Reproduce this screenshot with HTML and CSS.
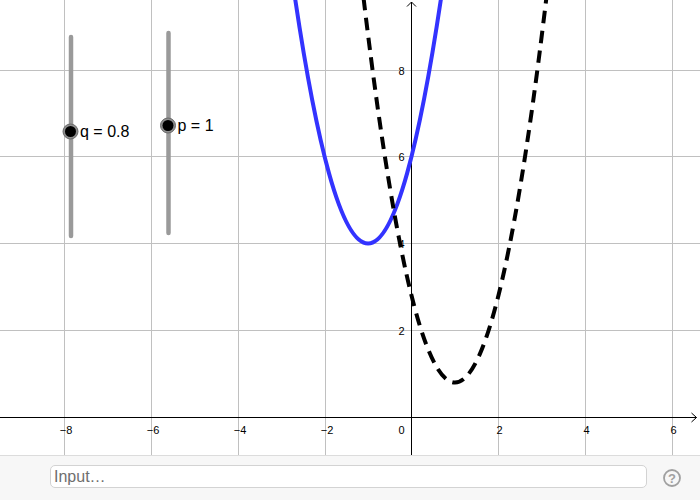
FILE: index.html
```html
<!DOCTYPE html>
<html>
<head>
<meta charset="utf-8">
<link rel="stylesheet" href="styles.css">
</head>
<body>
<div class="app">
  <div class="canvas">
    <svg class="graph" width="700" height="455" viewBox="0 0 700 455">
      <g class="grid">
        <line x1="64.5" y1="0" x2="64.5" y2="455"/>
        <line x1="151.5" y1="0" x2="151.5" y2="455"/>
        <line x1="238.5" y1="0" x2="238.5" y2="455"/>
        <line x1="325.5" y1="0" x2="325.5" y2="455"/>
        <line x1="498.5" y1="0" x2="498.5" y2="455"/>
        <line x1="585.5" y1="0" x2="585.5" y2="455"/>
        <line x1="672.5" y1="0" x2="672.5" y2="455"/>
        <line x1="0" y1="70.5" x2="700" y2="70.5"/>
        <line x1="0" y1="156.5" x2="700" y2="156.5"/>
        <line x1="0" y1="243.5" x2="700" y2="243.5"/>
        <line x1="0" y1="330.5" x2="700" y2="330.5"/>
      </g>
      <g class="axes">
        <line x1="0" y1="417.5" x2="696.5" y2="417.5"/>
        <line x1="411.5" y1="2" x2="411.5" y2="455"/>
        <polyline points="691.5,413 696.5,417.5 691.5,422"/>
        <polyline points="407,6.5 411.5,2 416,6.5"/>
      </g>
      <g class="labels">
        <text x="66" y="433.5" class="mid">−8</text>
        <text x="153" y="433.5" class="mid">−6</text>
        <text x="240" y="433.5" class="mid">−4</text>
        <text x="327" y="433.5" class="mid">−2</text>
        <text x="404.5" y="433.5" class="end">0</text>
        <text x="499.5" y="433.5" class="mid">2</text>
        <text x="586.5" y="433.5" class="mid">4</text>
        <text x="673.5" y="433.5" class="mid">6</text>
        <text x="404.5" y="74.5" class="end">8</text>
        <text x="404.5" y="161" class="end">6</text>
        <text x="404.5" y="247.5" class="end">4</text>
        <text x="404.5" y="334.5" class="end">2</text>
      </g>
      <path class="curve-f" d="M289.84,-38.06 Q368.05,525.06 446.26,-38.06"/>
      <path class="curve-g" d="M359.36,-38.06 Q455,803.1 550.54,-38.06"/>
      <g class="slider">
        <line class="track" x1="71" y1="37" x2="71" y2="236"/>
        <circle class="ring" cx="70.5" cy="131.5" r="7.5"/>
        <circle class="knob" cx="70.5" cy="131.5" r="5.5"/>
        <text class="slabel" x="80" y="136.5">q = 0.8</text>
      </g>
      <g class="slider">
        <line class="track" x1="168.5" y1="33" x2="168.5" y2="233"/>
        <circle class="ring" cx="168" cy="125.5" r="7.5"/>
        <circle class="knob" cx="168" cy="125.5" r="5.5"/>
        <text class="slabel" x="177.5" y="130.5">p = 1</text>
      </g>
    </svg>
  </div>
  <div class="inputbar">
    <div class="inputbox"><span class="placeholder">Input…</span></div>
    <svg class="help" width="20" height="20" viewBox="0 0 20 20">
      <circle cx="10" cy="10" r="8" class="help-ring"/>
      <text x="10" y="14.5" class="help-q">?</text>
    </svg>
  </div>
</div>
</body>
</html>
```
FILE: styles.css
```css
html, body {
  margin: 0;
  padding: 0;
  background: #ffffff;
  overflow: hidden;
}

.app {
  width: 700px;
  height: 500px;
  display: flex;
  flex-direction: column;
  font-family: "Liberation Sans", Arial, sans-serif;
}

.canvas {
  height: 455px;
  background: #ffffff;
}

.graph {
  display: block;
}

.grid line {
  stroke: #c0c0c0;
  stroke-width: 1;
}

.axes line,
.axes polyline {
  stroke: #000000;
  stroke-width: 1;
  fill: none;
}

.labels text {
  font-family: "Liberation Sans", Arial, sans-serif;
  font-size: 11px;
  fill: #000000;
}

.labels .mid {
  text-anchor: middle;
}

.labels .end {
  text-anchor: end;
}

.curve-f {
  fill: none;
  stroke: #3333ff;
  stroke-width: 4;
}

.curve-g {
  fill: none;
  stroke: #000000;
  stroke-width: 4;
  stroke-dasharray: 12.5 7.5;
  stroke-dashoffset: 4;
}

.track {
  stroke: #9a9a9a;
  stroke-width: 4.5;
  stroke-linecap: round;
}

.ring {
  fill: #8e8e8e;
  stroke: #6a6a6a;
  stroke-width: 1;
}

.knob {
  fill: #000000;
}

.slabel {
  font-family: "Liberation Sans", Arial, sans-serif;
  font-size: 16px;
  fill: #000000;
}

.inputbar {
  flex: 1;
  border-top: 1px solid #dcdcdc;
  background: #f7f7f7;
  display: flex;
  align-items: flex-start;
  padding: 9px 0 0 50px;
  gap: 14px;
}

.inputbox {
  box-sizing: border-box;
  width: 597px;
  height: 23px;
  border: 1px solid #d3d3d3;
  border-radius: 5px;
  background: #ffffff;
  padding-left: 3px;
  line-height: 21px;
}

.placeholder {
  font-size: 16px;
  color: #6e6e6e;
}

.help {
  display: block;
  margin-top: 3px;
  margin-left: 1px;
}

.help-ring {
  fill: none;
  stroke: #a0a0a0;
  stroke-width: 1.8;
}

.help-q {
  font-family: "Liberation Sans", Arial, sans-serif;
  font-size: 13px;
  font-weight: bold;
  fill: #a0a0a0;
  text-anchor: middle;
}
```
